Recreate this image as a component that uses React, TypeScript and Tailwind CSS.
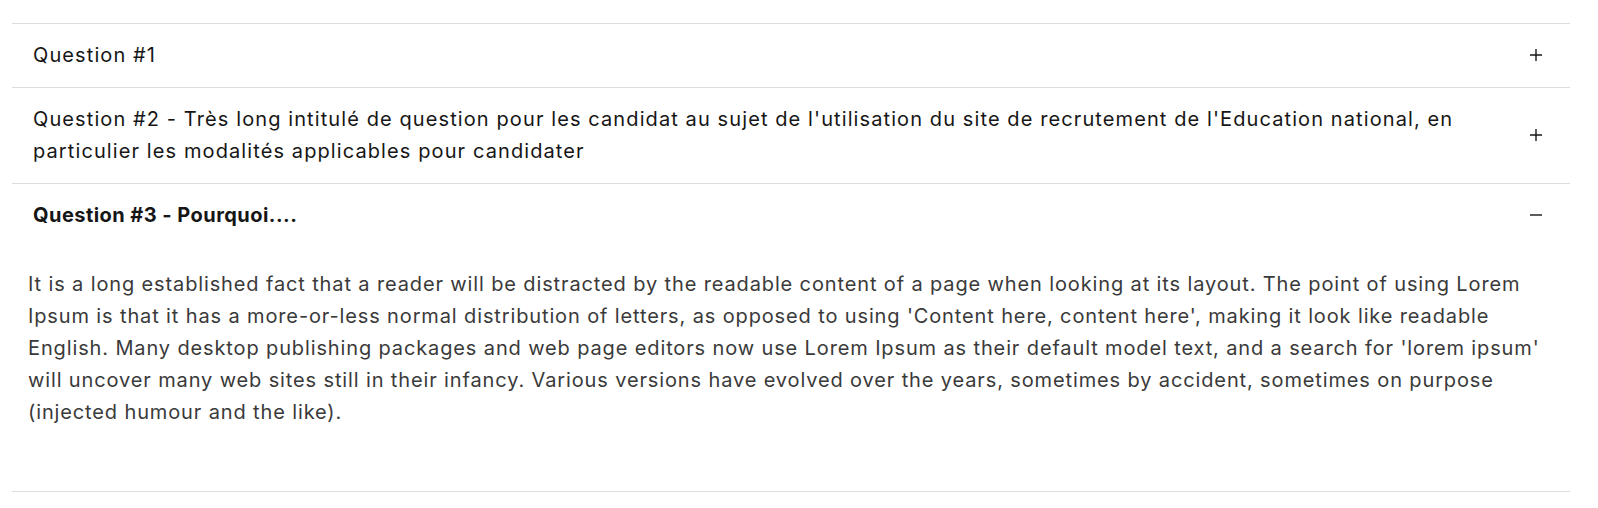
import { useState } from "react"

type Item = {
  id: number
  title: string
  body?: string
}

const items: Item[] = [
  { id: 1, title: "Question #1" },
  {
    id: 2,
    title:
      "Question #2 - Très long intitulé de question pour les candidat au sujet de l'utilisation du site de recrutement de l'Education national, en particulier les modalités applicables pour candidater",
  },
  {
    id: 3,
    title: "Question #3 - Pourquoi....",
    body:
      "It is a long established fact that a reader will be distracted by the readable content of a page when looking at its layout. The point of using Lorem Ipsum is that it has a more-or-less normal distribution of letters, as opposed to using 'Content here, content here', making it look like readable English. Many desktop publishing packages and web page editors now use Lorem Ipsum as their default model text, and a search for 'lorem ipsum' will uncover many web sites still in their infancy. Various versions have evolved over the years, sometimes by accident, sometimes on purpose (injected humour and the like).",
  },
]

function PlusIcon() {
  return (
    <svg width="16" height="16" viewBox="0 0 16 16" aria-hidden>
      <path d="M2 8h12M8 2v12" stroke="#161616" strokeWidth="1.4" fill="none" />
    </svg>
  )
}

function MinusIcon() {
  return (
    <svg width="16" height="16" viewBox="0 0 16 16" aria-hidden>
      <path d="M2 8h12" stroke="#161616" strokeWidth="1.4" fill="none" />
    </svg>
  )
}

export default function App() {
  const [open, setOpen] = useState<number | null>(3)

  return (
    <div className="min-h-[508px] bg-white pt-[23px] pl-3 pr-7 font-['Inter',sans-serif]">
      <section className="border-b border-[#dddddd]">
        {items.map((item) => {
          const expanded = open === item.id
          return (
            <div key={item.id} className="border-t border-[#dddddd]">
              <button
                type="button"
                onClick={() => setOpen(expanded ? null : item.id)}
                className={`flex w-full items-center gap-6 pt-[15px] pb-4 pl-[21px] pr-[26px] text-left text-[20px] leading-8 text-[#161616] ${
                  expanded ? "font-bold tracking-[0.45px]" : "font-normal tracking-[1.1px]"
                }`}
              >
                <span className="flex-1">{item.title}</span>
                {expanded ? <MinusIcon /> : <PlusIcon />}
              </button>
              {expanded && item.body && (
                <div className="px-4 pt-[21px] pb-[63px]">
                  <p className="text-[20px] leading-8 tracking-[0.87px] text-[#3a3a3a]">{item.body}</p>
                </div>
              )}
            </div>
          )
        })}
      </section>
    </div>
  )
}
